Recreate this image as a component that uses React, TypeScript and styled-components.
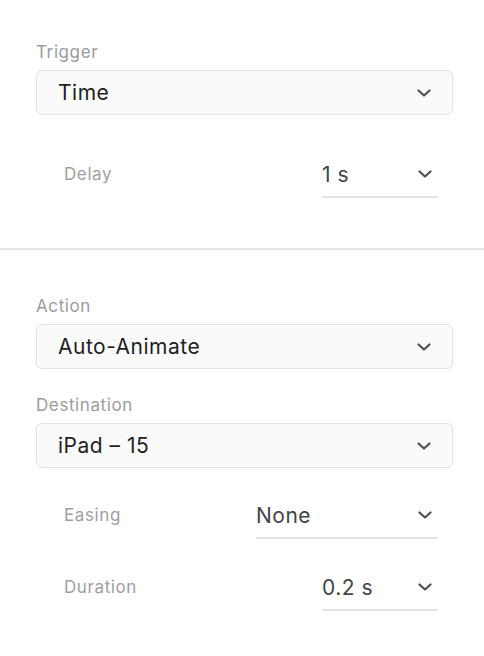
import React from "react";
import styled, { createGlobalStyle } from "styled-components";

const GlobalStyle = createGlobalStyle`
  html, body {
    margin: 0;
    padding: 0;
    background: #ffffff;
  }
  body {
    font-family: Inter, "Open Sans", "Liberation Sans", sans-serif;
    -webkit-font-smoothing: antialiased;
  }
`;

const Chevron = () => (
  <ChevronSvg viewBox="0 0 14 8" width="14" height="8">
    <polyline
      points="1.5,1.5 7,6.5 12.5,1.5"
      fill="none"
      stroke="#505050"
      strokeWidth="2.2"
      strokeLinecap="round"
      strokeLinejoin="round"
    />
  </ChevronSvg>
);

const SelectBox = ({ value, mb }: { value: string; mb?: number }) => (
  <Box mb={mb}>
    <BoxText>{value}</BoxText>
    <Chevron />
  </Box>
);

const Row = ({
  label,
  value,
  width,
  mt,
}: {
  label: string;
  value: string;
  width: number;
  mt: number;
}) => (
  <RowWrap mt={mt}>
    <RowLabel>{label}</RowLabel>
    <Field w={width}>
      <FieldText>{value}</FieldText>
      <Chevron />
    </Field>
  </RowWrap>
);

const App = () => {
  return (
    <>
      <GlobalStyle />
      <Panel>
        <Section top={42} bottom={50}>
          <Label>Trigger</Label>
          <SelectBox value="Time" />
          <Row label="Delay" value="1 s" width={116} mt={44} />
        </Section>
        <Divider />
        <Section top={46} bottom={46}>
          <Label>Action</Label>
          <SelectBox value="Auto-Animate" mb={26} />
          <Label>Destination</Label>
          <SelectBox value="iPad – 15" />
          <Row label="Easing" value="None" width={182} mt={32} />
          <Row label="Duration" value="0.2 s" width={116} mt={33} />
        </Section>
      </Panel>
    </>
  );
};

export default App;

const Panel = styled.div`
  width: 484px;
  display: flex;
  flex-direction: column;
`;

const Section = styled.div<{ top: number; bottom: number }>`
  display: flex;
  flex-direction: column;
  padding: ${(p) => p.top}px 31px ${(p) => p.bottom}px 36px;
`;

const Divider = styled.div`
  height: 2px;
  background: #e6e6e6;
`;

const Label = styled.div`
  font-size: 17px;
  line-height: 20px;
  letter-spacing: 0.6px;
  color: #9b9b9b;
  margin-bottom: 8px;
`;

const Box = styled.div<{ mb?: number }>`
  display: flex;
  align-items: center;
  justify-content: space-between;
  height: 45px;
  box-sizing: border-box;
  padding: 0 21px 0 21px;
  border: 1px solid #e2e2e2;
  border-radius: 6px;
  background: #fafafa;
  margin-bottom: ${(p) => p.mb ?? 0}px;
`;

const BoxText = styled.span`
  font-size: 21px;
  letter-spacing: 0.5px;
  color: #1f1f1f;
`;

const ChevronSvg = styled.svg`
  display: block;
  flex-shrink: 0;
`;

const RowWrap = styled.div<{ mt: number }>`
  display: flex;
  align-items: flex-start;
  justify-content: space-between;
  margin-top: ${(p) => p.mt}px;
  padding: 0 15px 0 28px;
`;

const RowLabel = styled.div`
  font-size: 17px;
  line-height: 30px;
  letter-spacing: 0.6px;
  color: #a0a0a0;
`;

const Field = styled.div<{ w: number }>`
  width: ${(p) => p.w}px;
  height: 39px;
  box-sizing: border-box;
  padding: 0 6px 7px 0;
  display: flex;
  align-items: center;
  justify-content: space-between;
  border-bottom: 2px solid #e3e3e3;
`;

const FieldText = styled.span`
  font-size: 21px;
  letter-spacing: 0.5px;
  color: #444444;
`;
